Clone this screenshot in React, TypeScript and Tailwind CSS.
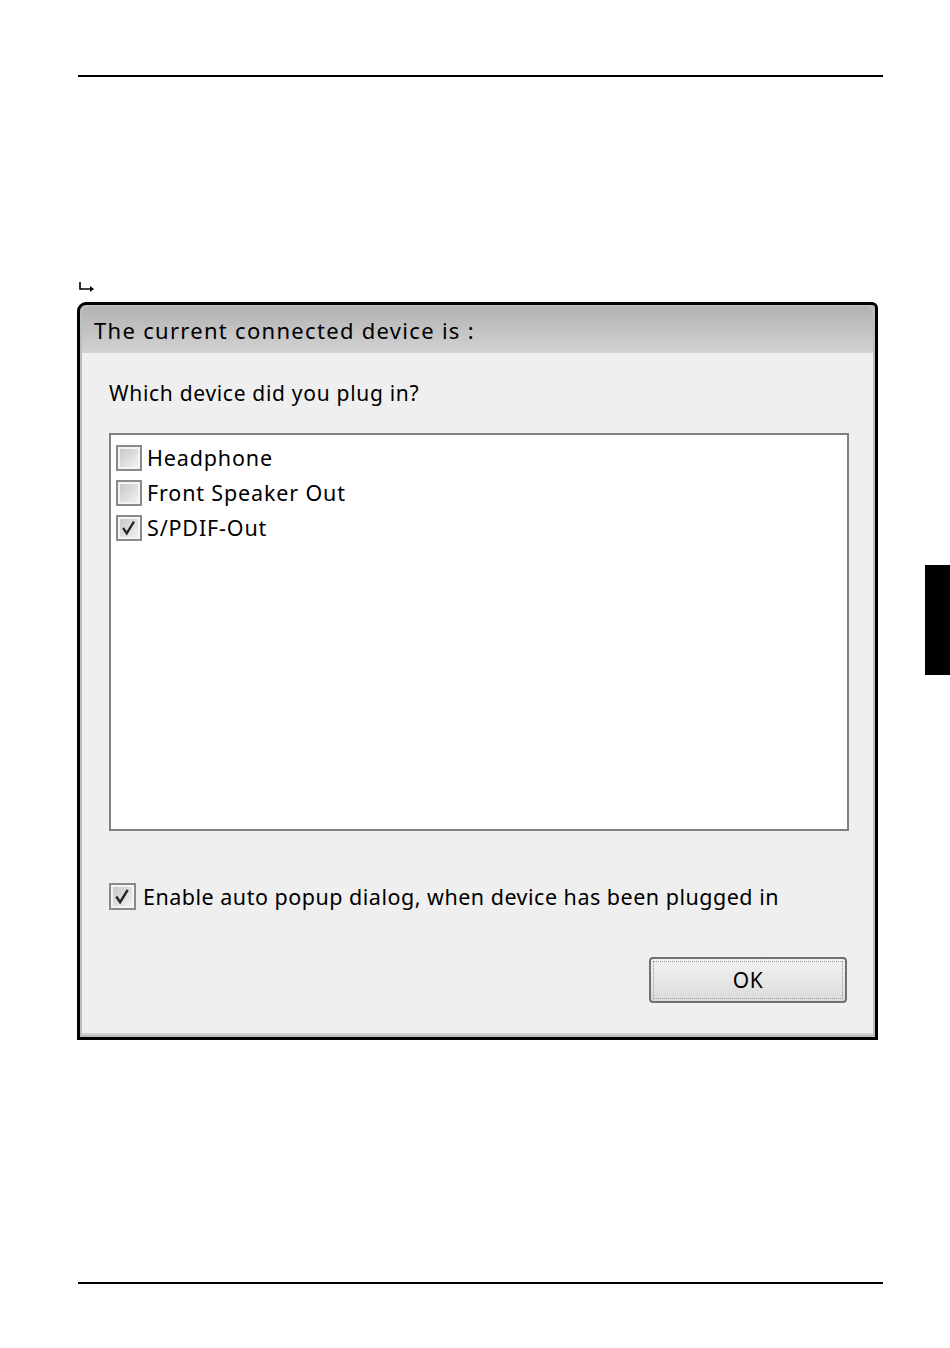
import React from "react";

function Check({ checked, size = 26 }: { checked: boolean; size?: number }) {
  return (
    <div
      className="shrink-0 border-2 border-[#8a8a8a] bg-[#f4f4f4] p-[2px]"
      style={{ width: size, height: size }}
    >
      <div className="relative w-full h-full bg-gradient-to-br from-[#c8c8c8] to-[#f2f2f2]">
        {checked && (
          <svg viewBox="0 0 20 20" className="absolute inset-0 w-full h-full">
            <path d="M3.5 10 L7.5 16 L15.5 3" fill="none" stroke="#262626" strokeWidth="2.6" strokeLinejoin="miter" />
          </svg>
        )}
      </div>
    </div>
  );
}

function Item({ label, checked }: { label: string; checked: boolean }) {
  return (
    <div className="flex items-center h-[35px] gap-[5px]">
      <Check checked={checked} />
      <span className="text-[21.5px] leading-none text-black tracking-[0.85px]">{label}</span>
    </div>
  );
}

export default function App() {
  return (
    <div
      className="relative w-[950px] h-[1348px] bg-white overflow-hidden"
      style={{ fontFamily: '"Noto Sans", "Open Sans", sans-serif' }}
    >
      <div className="flex flex-col">
        <div className="mt-[75px] ml-[78px] w-[805px] h-[2px] bg-black" />

        <div className="mt-[205px] ml-[79px] h-[10px] flex">
          <svg width="17" height="10" viewBox="0 0 17 10">
            <path d="M1 0 V7 H12" fill="none" stroke="#000" strokeWidth="1.6" />
            <path d="M11 4 L15 7 L11 10 Z" fill="#000" />
          </svg>
        </div>

        <div className="mt-[10px] ml-[77px] w-[801px] h-[738px] border-[3px] border-black rounded-tl-[9px] rounded-tr-[6px] bg-[#bdbdbd] p-[2px] flex flex-col">
          <div className="rounded-t-[6px] h-[46px] bg-gradient-to-b from-[#b2b2b2] to-[#d3d3d3] flex items-center pl-[12px]">
            <span className="text-[22px] leading-none text-black tracking-[1.3px]">
              The current connected device is :
            </span>
          </div>
          <div className="flex-1 bg-[#efefef] border-b-[2px] border-[#d2d2d2] pl-[27px] pr-[24px] pt-[27px] flex flex-col">
            <div className="h-[26px] flex items-center text-[21px] leading-none text-black tracking-[0.7px]">
              Which device did you plug in?
            </div>
            <div className="mt-[27px] h-[398px] border-2 border-[#808080] bg-white pl-[5px] pt-[5px] flex flex-col">
              <Item label="Headphone" checked={false} />
              <Item label="Front Speaker Out" checked={false} />
              <Item label="S/PDIF-Out" checked={true} />
            </div>
            <div className="mt-[52px] flex items-center gap-[7px]">
              <Check checked={true} size={27} />
              <span className="text-[21.5px] leading-none text-black tracking-[0.5px]">
                Enable auto popup dialog, when device has been plugged in
              </span>
            </div>
            <div className="mt-[47px] flex justify-end pr-[2px]">
              <div className="w-[198px] h-[46px] border-2 border-[#707070] rounded-[4px] bg-gradient-to-b from-[#f3f3f3] to-[#dadada] p-[2px]">
                <div className="w-full h-full border border-dotted border-[#9a9a9a] flex items-center justify-center text-[21px] leading-none text-black tracking-[0.5px]">
                  OK
                </div>
              </div>
            </div>
          </div>
        </div>

        <div className="mt-[242px] ml-[78px] w-[805px] h-[2px] bg-black" />
      </div>

      <div className="absolute left-[925px] top-[565px] w-[25px] h-[110px] bg-black" />
    </div>
  );
}
